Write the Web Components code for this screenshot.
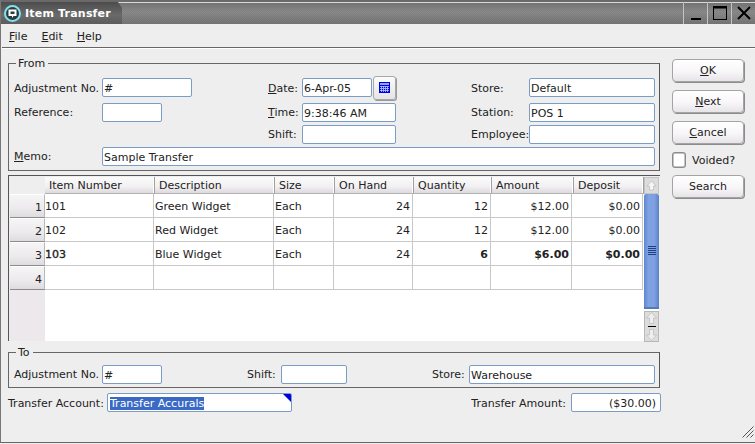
<!DOCTYPE html>
<html>
<head>
<meta charset="utf-8">
<title>Item Transfer</title>
<style>
  html, body { margin: 0; padding: 0; background: #eeeeee; }
  body { font: 11px "DejaVu Sans", sans-serif; color: #222; }
  u { text-underline-offset: 1px; }
  .sel { background: #3a6ac6; color: #fff; margin-left: 1px; }
  b { font-weight: bold; }
</style>
</head>
<body>

<app-window>
  <title-bar slot="title">Item Transfer</title-bar>
  <menu-bar slot="menu">
    <span><u>F</u>ile</span>
    <span><u>E</u>dit</span>
    <span><u>H</u>elp</span>
  </menu-bar>

  <transfer-form>
    <group-box legend="From" slot="from">
      <form-grid kind="from">
        <span>Adjustment No.</span>
        <text-field style="width:90px">#</text-field>
        <span><u>D</u>ate:</span>
        <date-field>6-Apr-05</date-field>
        <span>Store:</span>
        <text-field>Default</text-field>

        <span>Reference:</span>
        <text-field style="width:60px"></text-field>
        <span><u>T</u>ime:</span>
        <text-field style="width:94px">9:38:46 AM</text-field>
        <span>Station:</span>
        <text-field>POS 1</text-field>

        <span></span>
        <span></span>
        <span>Shift:</span>
        <text-field style="width:94px"></text-field>
        <span>Employee:</span>
        <text-field></text-field>

        <span><u>M</u>emo:</span>
        <text-field style="grid-column: 2 / -1">Sample Transfer</text-field>
      </form-grid>
    </group-box>

    <data-grid slot="grid"></data-grid>

    <group-box legend="To" slot="to">
      <form-grid kind="to">
        <span>Adjustment No.</span>
        <text-field style="width:60px">#</text-field>
        <span>Shift:</span>
        <text-field style="width:66px"></text-field>
        <span>Store:</span>
        <text-field>Warehouse</text-field>
      </form-grid>
    </group-box>

    <form-grid kind="totals" slot="totals">
      <span>Transfer Account:</span>
      <text-field marker><span class="sel">Transfer Accurals</span></text-field>
      <span style="text-align:right;padding-right:5px">Transfer Amount:</span>
      <text-field align="right">($30.00)</text-field>
    </form-grid>

    <win-button slot="actions"><u>O</u>K</win-button>
    <win-button slot="actions"><u>N</u>ext</win-button>
    <win-button slot="actions"><u>C</u>ancel</win-button>
    <check-box slot="actions">Voided?</check-box>
    <win-button slot="actions">Search</win-button>
  </transfer-form>
</app-window>

<script>
// ---------------- ventana ----------------
class AppWindow extends HTMLElement {
  constructor() {
    super();
    this.attachShadow({ mode: "open" });
    this.shadowRoot.innerHTML = `
      <style>
        :host {
          display: flex;
          flex-direction: column;
          position: relative;
          box-sizing: border-box;
          width: 755px;
          height: 443px;
          background: #eeeeee;
          border-left: 1px solid #777;
          border-bottom: 1px solid #666;
          overflow: hidden;
        }
        .grip { position: absolute; right: 1px; bottom: 4px; }
      </style>
      <slot name="title"></slot>
      <slot name="menu"></slot>
      <slot></slot>
      <svg class="grip" width="12" height="12" viewBox="0 0 12 12" fill="none" stroke="#555" stroke-width="1">
        <path d="M0.5 11.5 L11.5 0.5 M4.5 11.5 L11.5 4.5 M8.5 11.5 L11.5 8.5"/>
      </svg>
    `;
  }
}

class TitleBar extends HTMLElement {
  constructor() {
    super();
    this.attachShadow({ mode: "open" });
    this.shadowRoot.innerHTML = `
      <style>
        :host {
          display: flex;
          height: 24px;
          margin-left: -1px;
          background:
            conic-gradient(rgba(0,0,0,.06) 25%, transparent 0 50%, rgba(0,0,0,.06) 0 75%, transparent 0) 0 0 / 2px 2px,
            linear-gradient(#747474, #8b8b8b 45%, #767676);
          border-top: 2px solid #6a6a6a;
          box-sizing: border-box;
          box-shadow: inset 0 1px 0 #d8d8d8;
        }
        .tab {
          display: flex;
          align-items: center;
          gap: 4px;
          width: 122px;
          box-sizing: border-box;
          padding-left: 4px;
          background: linear-gradient(#4c4c4c, #6a6a6a 60%, #5c5c5c);
          color: #fff;
          font: bold 11px "DejaVu Sans", sans-serif;
          letter-spacing: .2px;
          clip-path: polygon(0 0, 118px 0, 122px 6px, 122px 100%, 0 100%);
        }
        .spacer { flex: 1; }
        .btn {
          width: 24px;
          border-left: 1px solid #c4c4c4;
          box-sizing: border-box;
          display: flex;
          align-items: center;
          justify-content: center;
        }
      </style>
      <div class="tab">
        <svg width="17" height="17" viewBox="0 0 17 17">
          <circle cx="8.5" cy="8.5" r="7.5" fill="#2c3a3e" stroke="#80e2ee" stroke-width="2"/>
          <path d="M4.5 4.5 H12.5 V11 H9.5 L8 13 V11 H4.5 Z M6.5 6.5 V9 H10.5 V6.5 Z" fill="#fff" fill-rule="evenodd"/>
        </svg>
        <span><slot></slot></span>
      </div>
      <div class="spacer"></div>
      <div class="btn">
        <svg width="14" height="16" viewBox="0 0 14 16"><rect x="2" y="13" width="10" height="2" fill="#000"/></svg>
      </div>
      <div class="btn">
        <svg width="14" height="16" viewBox="0 0 14 16" fill="none" stroke="#000"><rect x="0.5" y="1.5" width="13" height="13"/><path d="M0 2.5 H14" stroke-width="2"/></svg>
      </div>
      <div class="btn">
        <svg width="14" height="14" viewBox="0 0 14 14" fill="none" stroke="#000" stroke-width="2"><path d="M1 1 L13 13 M13 1 L1 13"/></svg>
      </div>
    `;
  }
}

class MenuBar extends HTMLElement {
  constructor() {
    super();
    this.attachShadow({ mode: "open" });
    this.shadowRoot.innerHTML = `
      <style>
        :host {
          display: flex;
          align-items: center;
          gap: 14px;
          height: 24px;
          box-sizing: border-box;
          padding: 2px 0 0 7px;
          margin-left: 1px;
          border-bottom: 1px solid #666;
          box-shadow: 0 1px 0 #fff;
        }
      </style>
      <slot></slot>
    `;
  }
}

// ---------------- formulario ----------------
class TransferForm extends HTMLElement {
  constructor() {
    super();
    this.attachShadow({ mode: "open" });
    this.shadowRoot.innerHTML = `
      <style>
        :host {
          display: grid;
          grid-template-columns: 653px 72px;
          column-gap: 11px;
          padding: 9px 0 0 7px;
        }
        .left { display: flex; flex-direction: column; }
        .right { display: flex; flex-direction: column; padding-top: 2px; gap: 8px; }
      </style>
      <div class="left">
        <slot name="from"></slot>
        <slot name="grid"></slot>
        <slot name="to"></slot>
        <slot name="totals"></slot>
      </div>
      <div class="right">
        <slot name="actions"></slot>
      </div>
    `;
  }
}

class GroupBox extends HTMLElement {
  constructor() {
    super();
    this.attachShadow({ mode: "open" });
    this.shadowRoot.innerHTML = `
      <style>
        :host { display: block; width: 652px; }
        fieldset {
          margin: 0;
          padding: 0 0 0 5px;
          border: 1px solid #666;
          border-right-color: #555;
          min-width: 0;
        }
        legend { padding: 0 3px 0 2px; margin-left: 2px; line-height: 13px; }
      </style>
      <fieldset>
        <legend class="titulo"></legend>
        <slot></slot>
      </fieldset>
    `;
  }
  connectedCallback() {
    this.shadowRoot.querySelector(".titulo").textContent = this.getAttribute("legend") || "";
  }
}

class FormGrid extends HTMLElement {
  constructor() {
    super();
    this.attachShadow({ mode: "open" });
    this.shadowRoot.innerHTML = `
      <style>
        :host { display: grid; align-items: start; }
        :host([kind="from"]) {
          grid-template-columns: 88px 166px 34px 169px 58px 126px;
          grid-template-rows: 22px 19px 19px 19px;
          row-gap: 3px;
          padding: 8px 0 4px;
        }
        :host([kind="to"]) {
          grid-template-columns: 88px 145px 34px 151px 37px 186px;
          grid-template-rows: 19px;
          padding: 6px 0 3px;
        }
        :host([kind="totals"]) {
          grid-template-columns: 99px 185px 1fr 90px;
          margin-top: 5px;
        }
        ::slotted(span) { line-height: 19px; white-space: nowrap; }
        /* la primera fila y los totales van un pixel mas abajo */
        :host([kind="from"]) ::slotted(span:nth-child(-n+5)),
        :host([kind="totals"]) ::slotted(span) { padding-top: 1px; }
      </style>
      <slot></slot>
    `;
  }
}

class TextField extends HTMLElement {
  constructor() {
    super();
    this.attachShadow({ mode: "open" });
    this.shadowRoot.innerHTML = `
      <style>
        :host {
          display: block;
          position: relative;
          box-sizing: border-box;
          height: 19px;
          line-height: 19px;
          padding: 0 2px 0 1px;
          background: #fff;
          border: 1px solid #7a9cc6;
          border-radius: 2px;
          white-space: nowrap;
          overflow: hidden;
        }
        :host([align="right"]) { text-align: right; padding-right: 4px; }
        :host([marker])::after {
          content: "";
          position: absolute;
          top: 0;
          right: 0;
          border-top: 8px solid #0000e0;
          border-left: 8px solid transparent;
        }
      </style>
      <slot></slot>
    `;
  }
}

class DateField extends HTMLElement {
  constructor() {
    super();
    this.attachShadow({ mode: "open" });
    this.shadowRoot.innerHTML = `
      <style>
        :host { display: flex; align-items: center; gap: 1px; height: 19px; }
        .campo { width: 70px; flex: none; }
        button {
          flex: none;
          width: 23px;
          height: 24px;
          margin: 0;
          padding: 0;
          display: flex;
          align-items: center;
          justify-content: center;
          background: linear-gradient(#fbfbfb, #e6e4e6);
          border: 1px solid #a8a8a8;
          border-radius: 3px;
          box-shadow: 1px 1px 0 #999;
        }
      </style>
      <text-field class="campo"><slot></slot></text-field>
      <button aria-label="Calendar">
        <svg width="11" height="11" viewBox="0 0 11 11">
          <rect width="11" height="11" fill="#0000e6"/>
          <rect x="1" y="1" width="9" height="2" fill="#8fa8ff"/>
          <path d="M1 4.5 H10 M1 6.5 H10 M1 8.5 H10 M2.5 4 V10 M4.5 4 V10 M6.5 4 V10 M8.5 4 V10" stroke="#b8c8ff" stroke-width="0.8" fill="none"/>
        </svg>
      </button>
    `;
  }
}

class WinButton extends HTMLElement {
  constructor() {
    super();
    this.attachShadow({ mode: "open" });
    this.shadowRoot.innerHTML = `
      <style>
        :host {
          display: flex;
          align-items: center;
          justify-content: center;
          box-sizing: border-box;
          height: 23px;
          background: linear-gradient(#ffffff, #f8f6f8 55%, #e6e4e6);
          border: 1px solid #a4a4a4;
          border-radius: 4px;
          box-shadow: 1px 1px 0 #8c8c8c;
        }
      </style>
      <slot></slot>
    `;
  }
}

class CheckBox extends HTMLElement {
  constructor() {
    super();
    this.attachShadow({ mode: "open" });
    this.shadowRoot.innerHTML = `
      <style>
        :host { display: flex; align-items: center; gap: 6px; height: 16px; margin-bottom: -1px; }
        .caja {
          box-sizing: border-box;
          width: 14px;
          height: 16px;
          background: #fff;
          border: 2px solid #c4c4c4;
          outline: 1px solid #8c8c8c;
          outline-offset: -1px;
          border-radius: 3px;
        }
      </style>
      <div class="caja"></div>
      <span><slot></slot></span>
    `;
  }
}

// ---------------- tabla ----------------
const COLUMNAS = [
  { titulo: "Item Number" },
  { titulo: "Description" },
  { titulo: "Size" },
  { titulo: "On Hand", num: true },
  { titulo: "Quantity", num: true },
  { titulo: "Amount", num: true },
  { titulo: "Deposit", num: true },
];

const FILAS = [
  ["101", "Green Widget", "Each", "24", "12", "$12.00", "$0.00"],
  ["102", "Red Widget", "Each", "24", "12", "$12.00", "$0.00"],
  [`<span class="semi">103</span>`, "Blue Widget", "Each", "24", "<b>6</b>", "<b>$6.00</b>", "<b>$0.00</b>"],
  ["", "", "", "", "", "", ""],
];

class DataGrid extends HTMLElement {
  constructor() {
    super();
    this.attachShadow({ mode: "open" });
    this.shadowRoot.innerHTML = `
      <style>
        :host {
          display: flex;
          box-sizing: border-box;
          width: 652px;
          height: 166px;
          margin: 4px 0 5px;
          border-top: 1px solid #555;
          border-left: 1px solid #555;
          padding-top: 1px;
          padding-left: 1px;
          background: #eeeeee;
        }
        .tabla { flex: none; width: 634px; display: flex; flex-direction: column; }
        .cabecera {
          display: grid;
          grid-template-columns: 35px 110px 120px 60px 79px 78px 82px 70px;
          grid-template-rows: 17px;
          height: 17px;
          flex: none;
        }
        .th {
          background: linear-gradient(#fbfbfb, #f2f0f2 60%, #dcdadc);
          border-right: 1px solid #a0a0a0;
          border-bottom: 1px solid #b4b4b4;
          box-shadow: inset -1px 0 0 #fff;
          padding-left: 4px;
          line-height: 18px;
        }
        .th.esquina { background: #eeeeee; border: 0; box-shadow: none; }
        .cuerpo { flex: 1; display: grid; grid-template-columns: 35px 1fr; background: #fff; }
        .lateral { background: #ece8ec; display: flex; flex-direction: column; }
        .fila-n {
          box-sizing: border-box;
          height: 24px;
          padding-right: 2px;
          text-align: right;
          line-height: 25px;
          background: linear-gradient(#f6f5f6, #eceaec 60%, #dedcde);
          border-right: 1px solid #b8b8b8;
          border-bottom: 1px solid #8c8c8c;
          border-top: 1px solid #fff;
        }
        .fila {
          display: grid;
          grid-template-columns: 109px 120px 60px 79px 78px 81px 71px;
          grid-template-rows: 24px;
          height: 24px;
          width: 598px;
        }
        .td {
          box-sizing: border-box;
          border-right: 1px solid #c8c8c8;
          border-bottom: 1px solid #c8c8c8;
          padding: 0 2px 0 1px;
          line-height: 25px;
          white-space: nowrap;
        }
        .td:first-child { padding-left: 0; }
        .td.num { text-align: right; }
        .semi { -webkit-text-stroke: .35px #222; }
      </style>
      <div class="tabla">
        <div class="cabecera"></div>
        <div class="cuerpo">
          <div class="lateral"></div>
          <div class="datos"></div>
        </div>
      </div>
      <scroll-bar></scroll-bar>
    `;
  }

  connectedCallback() {
    const cabecera = this.shadowRoot.querySelector(".cabecera");
    cabecera.innerHTML = `<div class="th esquina"></div>` +
      COLUMNAS.map(c => `<div class="th">${c.titulo}</div>`).join("");

    this.shadowRoot.querySelector(".lateral").innerHTML =
      FILAS.map((f, i) => `<div class="fila-n">${i + 1}</div>`).join("");

    this.shadowRoot.querySelector(".datos").innerHTML = FILAS.map(f =>
      `<div class="fila">` +
      f.map((v, i) => `<div class="td${COLUMNAS[i].num ? " num" : ""}">${v}</div>`).join("") +
      `</div>`
    ).join("");
  }
}

class ScrollBar extends HTMLElement {
  constructor() {
    super();
    this.attachShadow({ mode: "open" });
    this.shadowRoot.innerHTML = `
      <style>
        :host {
          display: flex;
          flex-direction: column;
          flex: none;
          width: 15px;
          background: #fff;
        }
        .tope {
          flex: none;
          height: 17px;
          background: #dcdcdc;
          border: 1px solid #c4c4c4;
          box-sizing: border-box;
          display: flex;
          align-items: center;
          justify-content: center;
        }
        .barra {
          flex: none;
          height: 115px;
          box-sizing: border-box;
          background: linear-gradient(90deg, #5f86d0, #7fa2e2 30%, #7ea0e0 70%, #5b80c8);
          border-bottom: 2px solid #557ab8;
          border-radius: 2px 2px 0 0;
          display: flex;
          align-items: center;
          justify-content: center;
        }
        .abajo {
          flex: 1;
          margin-top: 2px;
          background: #dcdcdc;
          border: 1px solid #b8b8b8;
          box-sizing: border-box;
          display: flex;
          flex-direction: column;
          align-items: center;
          justify-content: center;
          gap: 2px;
        }
        .raya { width: 8px; height: 1px; background: #000; }
      </style>
      <div class="tope">
        <svg width="11" height="11" viewBox="0 0 11 11"><path d="M5.5 1 L10 6 H7.5 V10 H3.5 V6 H1 Z" fill="#f6f6f6" stroke="#b4b4b4" stroke-width="0.6"/></svg>
      </div>
      <div class="barra">
        <svg width="9" height="9" viewBox="0 0 9 9" fill="none" stroke="#1c3f86">
          <path d="M1 0.5 H9 M1 2.5 H9 M1 4.5 H9 M1 6.5 H9 M1 8.5 H9"/>
        </svg>
      </div>
      <div class="abajo">
        <svg width="11" height="12" viewBox="0 0 11 12"><path d="M5.5 0.5 L10.5 6 H7.5 V11.5 H3.5 V6 H0.5 Z" fill="#eeeeee" stroke="#b4b4b4" stroke-width="0.6"/></svg>
        <div class="raya"></div>
        <svg width="11" height="12" viewBox="0 0 11 12"><path d="M5.5 11.5 L10.5 6 H7.5 V0.5 H3.5 V6 H0.5 Z" fill="#eeeeee" stroke="#b4b4b4" stroke-width="0.6"/></svg>
      </div>
    `;
  }
}

customElements.define("app-window", AppWindow);
customElements.define("title-bar", TitleBar);
customElements.define("menu-bar", MenuBar);
customElements.define("transfer-form", TransferForm);
customElements.define("group-box", GroupBox);
customElements.define("form-grid", FormGrid);
customElements.define("text-field", TextField);
customElements.define("date-field", DateField);
customElements.define("win-button", WinButton);
customElements.define("check-box", CheckBox);
customElements.define("data-grid", DataGrid);
customElements.define("scroll-bar", ScrollBar);
</script>
</body>
</html>
